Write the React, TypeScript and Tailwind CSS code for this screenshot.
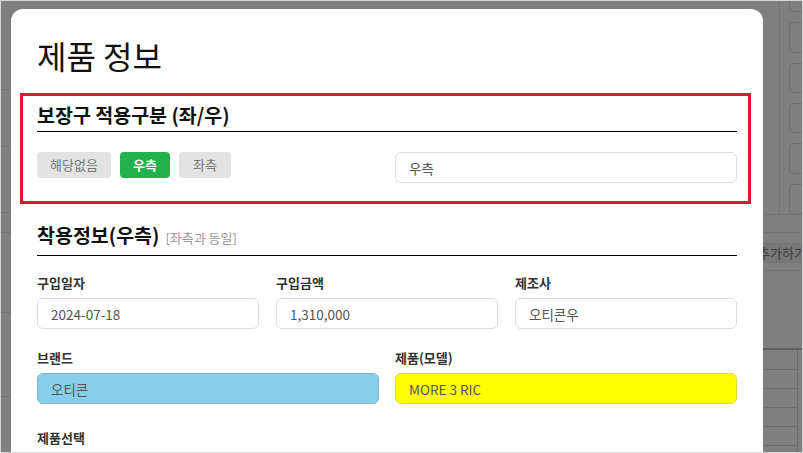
import React from 'react'

const font = { fontFamily: '"Noto Sans CJK KR", "Noto Sans", sans-serif' }

function Field({ label, value, className }: { label: string; value: string; className?: string }) {
  return (
    <div className="flex flex-col">
      <label className="text-[13px] leading-[18px] font-semibold text-[#333]">{label}</label>
      <input
        readOnly
        value={value}
        className={
          'mt-[6px] h-[31px] w-full rounded-[6px] border px-[13px] text-[13.5px] text-[#555] outline-none ' +
          (className ?? 'border-[#dcdcdc] bg-white')
        }
      />
    </div>
  )
}

// dimmed page that sits under the dialog
function Backdrop() {
  return (
    <div className="absolute inset-0 flex justify-between">
      <div className="flex w-[11px] flex-col">
        <div className="h-[89px] border-b border-[#747474]" />
        <div className="h-[57px] border-b border-[#747474]" />
        <div className="h-[66px] border-b border-[#747474]" />
        <div className="h-[20px] border-b border-[#747474]" />
        <div className="h-[80px] border-b border-[#747474]" />
        <div className="h-[84px] border-b border-[#747474]" />
      </div>

      <div className="flex w-[46px] flex-col">
        <div className="flex h-[214px] border-b border-[#747474]">
          <div className="w-[24px] border-r border-[#747474]" />
          <div className="ml-[9px] -mt-[20px] flex flex-1 flex-col gap-[10px]">
            <div className="h-[34px] rounded-l-[5px] border border-r-0 border-[#6f6f6f]" />
            <div className="h-[33px] rounded-l-[5px] border border-r-0 border-[#6f6f6f]" />
            <div className="h-[33px] rounded-l-[5px] border border-r-0 border-[#6f6f6f]" />
            <div className="h-[33px] rounded-l-[5px] border border-r-0 border-[#6f6f6f]" />
            <div className="h-[33px] rounded-l-[5px] border border-r-0 border-[#6f6f6f]" />
            <div className="h-[33px] rounded-l-[5px] border border-r-0 border-[#6f6f6f]" />
          </div>
        </div>
        <div className="h-[18px] border-b border-[#747474]" />
        <div className="mt-[10px] flex h-[20px] items-center whitespace-nowrap bg-[#777777] pl-[2px] text-[13px] text-[#3c3c3c]">
          추가하기
        </div>
        <div className="h-[8px] border-b border-[#747474]" />
        <div className="h-[79px] border-b-2 border-[#5c5c5c]" />
        <div className="mr-[4px] flex flex-1 flex-col border-r border-[#6c6c6c]">
          <div className="h-[20px] border-b border-[#6c6c6c]" />
          <div className="h-[19px] border-b border-[#6c6c6c]" />
          <div className="h-[19px] border-b border-[#6c6c6c]" />
          <div className="h-[19px] border-b border-[#6c6c6c]" />
          <div className="h-[19px] border-b border-[#6c6c6c]" />
        </div>
      </div>
    </div>
  )
}

export default function App() {
  return (
    <div
      className="relative h-[453px] w-[803px] overflow-hidden border border-[#d6d6d6] bg-[#7f7f7f]"
      style={font}
    >
      <Backdrop />

      <div className="absolute left-[10px] top-[8px] h-[470px] w-[752px] rounded-[12px] bg-white px-[26px]">
        <h1 className="mt-[24px] text-[32px] leading-[44px] font-normal text-[#111]">제품 정보</h1>

        <section className="-ml-[17px] -mr-[14px] mt-[16px] border-[3px] border-[#e5172f] pb-[18px] pl-[14px] pr-[11px] pt-[5px]">
          <h2 className="border-b border-black pb-[3px] text-[19.5px] leading-[27px] font-bold text-[#111]">
            보장구 적용구분 (좌/우)
          </h2>
          <div className="mt-[20px] grid grid-cols-2 gap-x-[16px]">
            <div className="flex items-start gap-[9px]">
              <button className="h-[26px] w-[74px] rounded-[4px] bg-[#e3e3e3] text-[13px] text-[#777]">해당없음</button>
              <button className="h-[26px] w-[50px] rounded-[4px] bg-[#24b14b] text-[13px] font-bold text-white">우측</button>
              <button className="h-[26px] w-[52px] rounded-[4px] bg-[#e3e3e3] text-[13px] text-[#777]">좌측</button>
            </div>
            <input
              readOnly
              value="우측"
              className="h-[31px] w-full rounded-[6px] border border-[#dcdcdc] px-[13px] text-[13.5px] text-[#555] outline-none"
            />
          </div>
        </section>

        <section className="mt-[17px]">
          <h2 className="flex items-baseline gap-[6px] border-b border-black pb-[4px] text-[19.5px] leading-[27px] font-bold text-[#111]">
            착용정보(우측)
            <span className="text-[13px] font-normal text-[#999]">[좌측과 동일]</span>
          </h2>
          <div className="mt-[18px] grid grid-cols-3 gap-x-[17px]">
            <Field label="구입일자" value="2024-07-18" />
            <Field label="구입금액" value="1,310,000" />
            <Field label="제조사" value="오티콘우" />
          </div>
          <div className="mt-[20px] grid grid-cols-2 gap-x-[16px]">
            <Field label="브랜드" value="오티콘" className="border-[#7fb6cc] bg-[#87ceeb]" />
            <Field label="제품(모델)" value="MORE 3 RIC" className="border-[#e0d94a] bg-[#ffff00]" />
          </div>
          <div className="mt-[25px] text-[13px] leading-[18px] font-semibold text-[#333]">제품선택</div>
        </section>
      </div>
    </div>
  )
}
